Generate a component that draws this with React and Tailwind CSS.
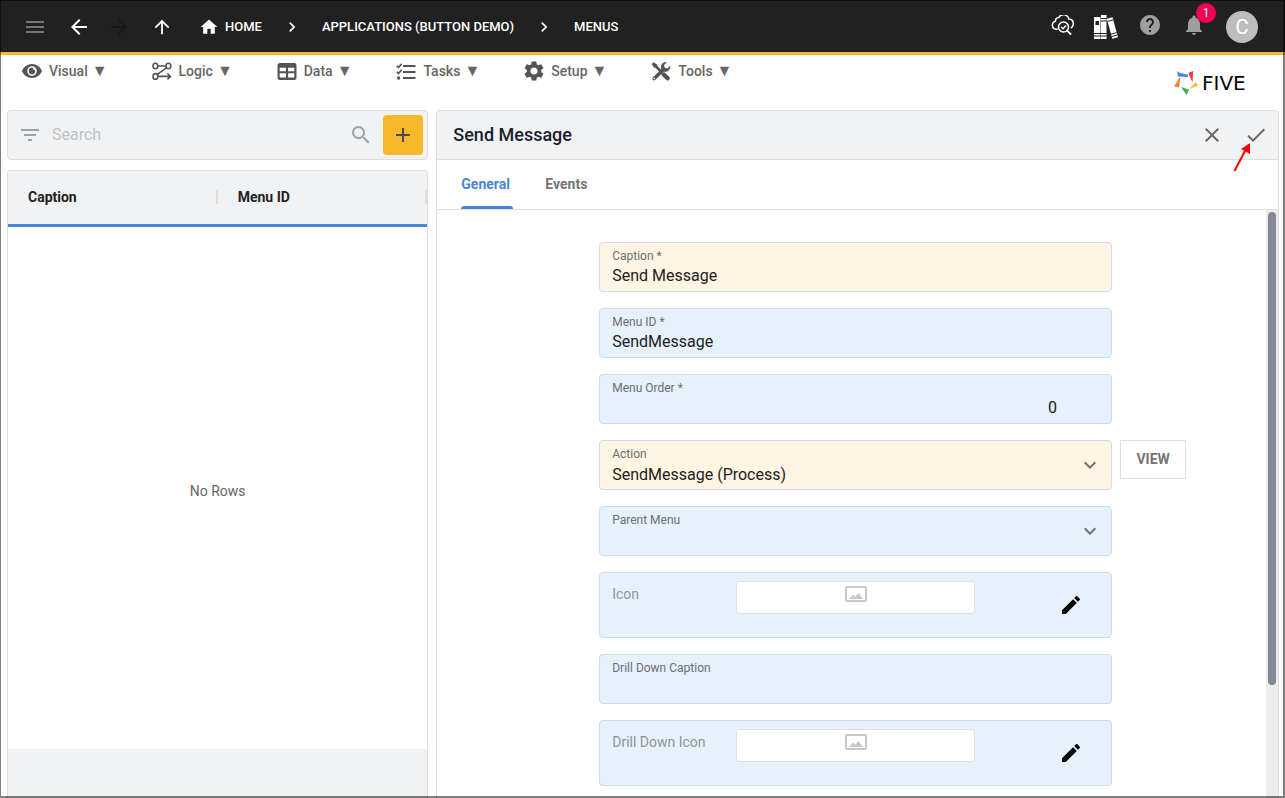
/**
 * Menus page - list on the left, record form on the right
 */

import { useState } from 'react';
import {
  MdMenu,
  MdArrowBack,
  MdArrowForward,
  MdArrowUpward,
  MdHome,
  MdChevronRight,
  MdHelp,
  MdNotifications,
  MdFilterList,
  MdSearch,
  MdAdd,
  MdClose,
  MdCheck,
  MdKeyboardArrowDown,
  MdEdit,
  MdSettings,
} from 'react-icons/md';

/* ---------- Icons ---------- */

function EyeIcon() {
  return (
    <svg viewBox="0 0 20 20" className="w-5 h-5" fill="currentColor">
      <path
        fillRule="evenodd"
        d="M10 3C5.400 3 1.600 5.900 0 10c1.600 4.100 5.400 7 10 7s8.400-2.900 10-7c-1.600-4.100-5.400-7-10-7Zm0 2.200a4.800 4.800 0 1 1 0 9.600 4.800 4.800 0 0 1 0-9.600Z"
      />
      <path d="M10 6.800a3.200 3.200 0 1 0 3.200 3.200c0-.4-.1-.8-.2-1.100a1.500 1.500 0 0 1-1.900-1.900c-.3-.1-.7-.2-1.100-.2Z" />
    </svg>
  );
}

function LogicIcon() {
  return (
    <svg viewBox="0 0 20 20" className="w-5 h-5" fill="none" stroke="currentColor" strokeWidth="1.600">
      <ellipse cx="3.400" cy="5" rx="2.400" ry="2.800" />
      <ellipse cx="16.400" cy="5" rx="2.400" ry="2.800" />
      <ellipse cx="3.400" cy="15.400" rx="2.400" ry="2.800" />
      <path d="M5.800 5h8.200M14.500 6.800 5.300 13.400M5.800 15.400h12.400M15.400 12.500l3 2.900-3 2.900" />
    </svg>
  );
}

function TableIcon() {
  return (
    <svg viewBox="0 0 20 20" className="w-5 h-5" fill="currentColor">
      <path
        fillRule="evenodd"
        d="M3 2h14a2.500 2.500 0 0 1 2.500 2.500v12a2.500 2.500 0 0 1-2.500 2.500H3A2.500 2.500 0 0 1 .5 16.500v-12A2.500 2.500 0 0 1 3 2ZM2.700 6.700v3.600h6.200V6.700Zm8.400 0v3.600h6.200V6.700Zm-8.400 5.600v4.200h6.200v-4.200Zm8.400 0v4.200h6.200v-4.200Z"
      />
    </svg>
  );
}

function TasksIcon() {
  return (
    <svg viewBox="0 0 20 20" className="w-5 h-5" fill="none" stroke="currentColor">
      <path strokeWidth="2" d="M7 5h12.500M7 11h12.500M7 17h12.500" />
      <path strokeWidth="1.600" d="M.7 4.800l1.700 1.700 3.200-3.600M.7 10.800l1.700 1.700 3.200-3.600" />
      <circle cx="2.600" cy="17" r="1.700" fill="currentColor" stroke="none" />
    </svg>
  );
}

function ToolsIcon() {
  return (
    <svg viewBox="0 0 20 20" className="w-5 h-5" fill="none" stroke="currentColor" strokeLinecap="round">
      <path strokeWidth="3.600" d="M3.200 17.500 12.600 8.500" />
      <path
        fill="currentColor"
        stroke="none"
        d="M19.300 4.700 16.400 7.500l-2.700-.7-.7-2.700L15.900 1.200a5 5 0 0 0-5.700 6.700l2.500 2.500a5 5 0 0 0 6.600-5.700Z"
      />
      <path fill="currentColor" stroke="none" d="M.7 3 2.500 1.200l3.600 2.200.4 1.700 4 4-1.900 1.900-4-4-1.700-.4Z" />
      <path strokeWidth="4.400" d="M12.800 13.500l3.800 3.800" />
      <circle cx="3.200" cy="17.500" r=".8" fill="white" stroke="none" />
    </svg>
  );
}

function CloudSearchIcon() {
  return (
    <svg viewBox="0 0 24 24" className="w-6 h-6" fill="none" stroke="white" strokeWidth="1.500">
      <path d="M7.700 14.300H6.100a4.200 4.200 0 0 1-.7-8.200 3.600 3.600 0 0 1 3.500-3.700 5.400 5.400 0 0 1 9.900 1.700c2.700.2 4.500 2 4.500 4.600 0 1.800-.9 3.400-2.400 4.300" />
      <circle cx="13.500" cy="12" r="5" />
      <path d="m17.100 15.600 4 4" strokeWidth="2" />
      <path d="m11.300 12 1.700 1.700 3-3.200" />
    </svg>
  );
}

function BooksIcon() {
  return (
    <svg viewBox="0 0 24 26" className="w-6 h-[26px]">
      <path fill="white" d="M0 3h6.500v22H0ZM7 1h5.500v24H7ZM12.800 4.700l5.700-1.500 5.500 20-5.700 1.600Z" />
      <path stroke="#212121" strokeWidth="1" fill="none" d="M0 19.500h12.500M0 22h12.500M7 4.500h5.500M7 7h5.500M13.800 7.400l5.400-1.500M17 20.200l5.700-1.600M17.700 22.600l5.700-1.600" />
      <path fill="#212121" d="M1.500 7h3.500v4H1.500Z" />
    </svg>
  );
}

function ImageIcon() {
  return (
    <svg viewBox="0 0 22 16" className="w-[22px] h-4">
      <rect x="1" y="1" width="20" height="14" rx="1" fill="none" stroke="#c8c8c8" strokeWidth="2" />
      <path fill="#c8c8c8" d="M4 13l4-4.500 2 2.300L13.500 7 18 13Z" />
    </svg>
  );
}

function FiveLogo() {
  return (
    <a href="#five" aria-label="Five" className="flex items-center gap-1 w-[88px]">
      <svg viewBox="0 0 24 24" className="w-6 h-6 shrink-0">
        <path fill="#4486d8" d="M3.200 0 5.500 1.800 14 3.800V6L3.900 5.500Z" />
        <path fill="#e53c3c" d="M19.200 0 18.500 11.500 14.300 2Z" />
        <path fill="#fbb829" d="M15 18 22 11 24 14.500Z" />
        <path fill="#3fae58" d="M6.800 16 15 18.500l-2.300 5.500Z" />
        <path fill="#f58233" d="M6.500 5 5 16.500 0 15.500Z" />
      </svg>
      <span className="font-['DejaVu_Sans',sans-serif] text-xl leading-6 text-black">FIVE</span>
    </a>
  );
}

/* ---------- Data ---------- */

const crumbs = ['APPLICATIONS (BUTTON DEMO)', 'MENUS'];

const menus = [
  { label: 'Visual', icon: <EyeIcon /> },
  { label: 'Logic', icon: <LogicIcon /> },
  { label: 'Data', icon: <TableIcon /> },
  { label: 'Tasks', icon: <TasksIcon /> },
  { label: 'Setup', icon: <MdSettings size={24} className="-m-0.5" /> },
  { label: 'Tools', icon: <ToolsIcon /> },
];

/* ---------- Form fields ---------- */

const fieldBox = 'col-start-2 relative flex flex-col h-[50px] border border-[#cbdced] rounded';
const labelText = 'px-3 pt-1 text-xs leading-[18px] text-[#6b6f75]';
const valueText = 'w-full px-3 bg-transparent text-base text-[#212121] outline-none';

function TextField({ id, label, value, onChange, changed, numeric }) {
  return (
    <div className={`${fieldBox} ${changed ? 'bg-[#fff5e2]' : 'bg-[#e6f1fc]'}`}>
      <label htmlFor={id} className={labelText}>{label}</label>
      <input
        id={id}
        type="text"
        value={value}
        onChange={(e) => onChange(e.target.value)}
        className={`${valueText} h-[22px] ${numeric ? 'text-right pr-[54px]' : ''}`}
      />
    </div>
  );
}

function SelectField({ id, label, options, changed }) {
  return (
    <div className={`${fieldBox} ${changed ? 'bg-[#fff5e2]' : 'bg-[#e6f1fc]'}`}>
      <label htmlFor={id} className={labelText}>{label}</label>
      <select id={id} className={`${valueText} h-6 appearance-none`}>
        {options.map((option) => (
          <option key={option}>{option}</option>
        ))}
      </select>
      <MdKeyboardArrowDown
        size={24}
        className="absolute right-[9px] top-3 text-[#6f6f6f] pointer-events-none"
      />
    </div>
  );
}

function IconField({ label }) {
  return (
    <div className="col-start-2 grid grid-cols-[1fr_239px_1fr] h-[66px] px-3 border border-[#cbdced] rounded bg-[#e6f1fc]">
      <span className="pt-[11px] text-sm text-[#8f959b]">{label}</span>
      <div className="mt-2 h-[33px] pt-1 flex justify-center items-start rounded-[3px] border border-[#dfdfdf] bg-white">
        <ImageIcon />
      </div>
      <button type="button" aria-label={`Edit ${label}`} className="justify-self-end self-center mr-4 text-black">
        <MdEdit size={24} />
      </button>
    </div>
  );
}

/* ---------- Page sections ---------- */

function TopBar() {
  return (
    <header className="flex items-center justify-between shrink-0 h-[55px] pt-0.5 pl-[23px] pr-[27px] bg-[#212121] border-b-3 border-[#fbb829] text-white">
      <div className="flex items-center">
        <button type="button" aria-label="Menu" className="mr-5 text-[#777777]"><MdMenu size={24} /></button>
        <button type="button" aria-label="Back" className="mr-4"><MdArrowBack size={24} /></button>
        <button type="button" aria-label="Forward" disabled className="mr-5 text-[#181818]"><MdArrowForward size={24} /></button>
        <button type="button" aria-label="Up" className="mr-[26px]"><MdArrowUpward size={22} /></button>
        <nav className="flex items-center gap-5 text-[13px] font-medium whitespace-nowrap">
          <a href="#home" className="flex items-center gap-1.5">
            <MdHome size={20} />
            HOME
          </a>
          {crumbs.map((crumb) => (
            <span key={crumb} className="flex items-center gap-5">
              <MdChevronRight size={20} />
              <a href="#crumb">{crumb}</a>
            </span>
          ))}
        </nav>
      </div>

      <div className="flex items-center gap-5">
        <button type="button" aria-label="Inspector"><CloudSearchIcon /></button>
        <button type="button" aria-label="Library"><BooksIcon /></button>
        <button type="button" aria-label="Help" className="pb-1 text-[#9e9e9e]"><MdHelp size={24} /></button>
        <button type="button" aria-label="Notifications" className="relative pb-1 text-[#9e9e9e]">
          <MdNotifications size={24} />
          <span className="absolute -top-2.5 -right-2.5 w-5 h-5 rounded-full bg-[#f50057] text-white text-xs leading-5 text-center">
            1
          </span>
        </button>
        <button type="button" aria-label="Account" className="w-8 h-8 rounded-full bg-[#bdbdbd] text-xl leading-8 text-center">
          C
        </button>
      </div>
    </header>
  );
}

function MenuBar() {
  return (
    <div className="flex items-start justify-between shrink-0 h-[55px] pl-[22px] pr-[23px]">
      <nav className="flex gap-11 pt-1.5">
        {menus.map((menu) => (
          <button
            key={menu.label}
            type="button"
            className="flex items-center h-5 text-sm font-medium text-[#666666] whitespace-nowrap"
          >
            <span className="mr-[7px] text-[#545454]">{menu.icon}</span>
            {menu.label}
            <span className="ml-1 text-base">▼</span>
          </button>
        ))}
      </nav>
      <div className="pt-4">
        <FiveLogo />
      </div>
    </div>
  );
}

function ListPanel() {
  const [search, setSearch] = useState('');

  return (
    <section className="flex flex-col gap-2.5 min-w-0 min-h-0">
      <div className="flex items-center shrink-0 pl-2.5 pr-1 py-1 bg-[#f1f2f4] border border-[#dedede] rounded">
        <MdFilterList size={24} className="shrink-0 text-[#98a2a8]" />
        <input
          type="search"
          aria-label="Search"
          placeholder="Search"
          value={search}
          onChange={(e) => setSearch(e.target.value)}
          className="flex-1 min-w-0 mx-2.5 bg-transparent text-base outline-none placeholder:text-[#bfc2c4]"
        />
        <MdSearch size={24} className="shrink-0 mr-2.5 text-[#98a2a8]" />
        <button
          type="button"
          aria-label="Add"
          className="flex items-center justify-center shrink-0 w-10 h-10 rounded bg-[#f8b829] text-[#4a4a4a]"
        >
          <MdAdd size={24} />
        </button>
      </div>

      <div className="flex flex-col flex-1 min-h-0 border border-b-0 border-[#dedede] rounded-t overflow-hidden">
        <div className="shrink-0 bg-[#f1f2f4] border-b-3 border-[#4486d8]">
          <table className="w-full table-fixed">
            <thead>
              <tr>
                {['Caption', 'Menu ID'].map((column) => (
                  <th key={column} scope="col" className="h-[53px] p-0 pb-px text-left">
                    <div className="flex items-center justify-between pl-5 text-sm font-bold text-[#212121]">
                      {column}
                      <span className="w-0.5 h-3.5 bg-[#dddddd]" />
                    </div>
                  </th>
                ))}
              </tr>
            </thead>
          </table>
        </div>
        <div className="flex-1 flex items-center justify-center pt-1.5 text-sm text-[#666666]">No Rows</div>
        <div className="h-[49px] bg-[#eef2f2]" />
      </div>
    </section>
  );
}

function RecordPanel() {
  const [form, setForm] = useState({
    caption: 'Send Message',
    menuId: 'SendMessage',
    menuOrder: '0',
    drillDownCaption: '',
  });

  const update = (key) => (value) => setForm({ ...form, [key]: value });

  return (
    <section className="flex flex-col min-w-0 min-h-0 border border-b-0 border-[#dedede] rounded-t overflow-hidden">
      {/* Title */}
      <div className="flex items-center shrink-0 h-[49px] pl-4 pr-2.5 bg-[#f1f2f4] border-b border-[#dedede]">
        <h1 className="flex-1 text-lg font-medium text-[#1a2033]">Send Message</h1>
        <button type="button" aria-label="Cancel" className="mr-5 text-[#6a6a6a]"><MdClose size={24} /></button>
        <button type="button" aria-label="Save" className="text-[#6a6a6a]"><MdCheck size={24} /></button>
      </div>

      {/* Tabs */}
      <div role="tablist" className="flex gap-8 shrink-0 h-[50px] pl-6 border-b border-[#dedede] text-sm font-bold">
        <button type="button" role="tab" aria-selected="true" className="relative min-w-[52px] pb-0.5 text-left text-[#4486d8]">
          General
          <span className="absolute inset-x-0 bottom-0 h-[3px] rounded-t bg-[#4486d8]" />
        </button>
        <button type="button" role="tab" aria-selected="false" className="pb-0.5 text-[#757575]">Events</button>
      </div>

      {/* Form */}
      <div className="flex flex-1 min-h-0">
        <form className="flex-1 grid grid-cols-[3fr_10fr_3fr] content-start gap-y-4 pl-2 pt-8 overflow-hidden">
          <TextField id="caption" label="Caption *" value={form.caption} onChange={update('caption')} changed />
          <TextField id="menuId" label="Menu ID *" value={form.menuId} onChange={update('menuId')} />
          <TextField id="menuOrder" label="Menu Order *" value={form.menuOrder} onChange={update('menuOrder')} numeric />
          <SelectField id="action" label="Action" options={['SendMessage (Process)']} changed />
          <button
            type="button"
            className="col-start-3 justify-self-start ml-2 h-[39px] w-[66px] pb-0.5 border border-[#dedede] text-sm font-bold text-[#757575]"
          >
            VIEW
          </button>
          <SelectField id="parentMenu" label="Parent Menu" options={['']} />
          <IconField label="Icon" />
          <TextField
            id="drillDownCaption"
            label="Drill Down Caption"
            value={form.drillDownCaption}
            onChange={update('drillDownCaption')}
          />
          <IconField label="Drill Down Icon" />
        </form>
        <div className="shrink-0 w-3 px-0.5 pt-0.5 bg-[#ececec]">
          <div className="h-[473px] rounded-full bg-[#838899]" />
        </div>
      </div>
    </section>
  );
}

function SaveArrow() {
  return (
    <svg viewBox="0 0 18 30" className="absolute top-[142px] right-[34px] w-[18px] h-[30px] pointer-events-none">
      <path d="M1.500 29 12 9" stroke="#ff0000" strokeWidth="2" />
      <path d="M17 1v11L8 7Z" fill="#ff0000" />
    </svg>
  );
}

function App() {
  return (
    <div className="relative flex flex-col h-screen overflow-hidden bg-white font-['Roboto',sans-serif]">
      <TopBar />
      <MenuBar />
      <main className="flex-1 grid grid-cols-[1fr_2fr] gap-2 min-h-0 pl-[7px] pr-1.5">
        <ListPanel />
        <RecordPanel />
      </main>
      <SaveArrow />
      {/* Window frame */}
      <div className="absolute inset-0 border-t border-l border-r-2 border-b-2 border-black/50 pointer-events-none" />
    </div>
  );
}

export default App;
